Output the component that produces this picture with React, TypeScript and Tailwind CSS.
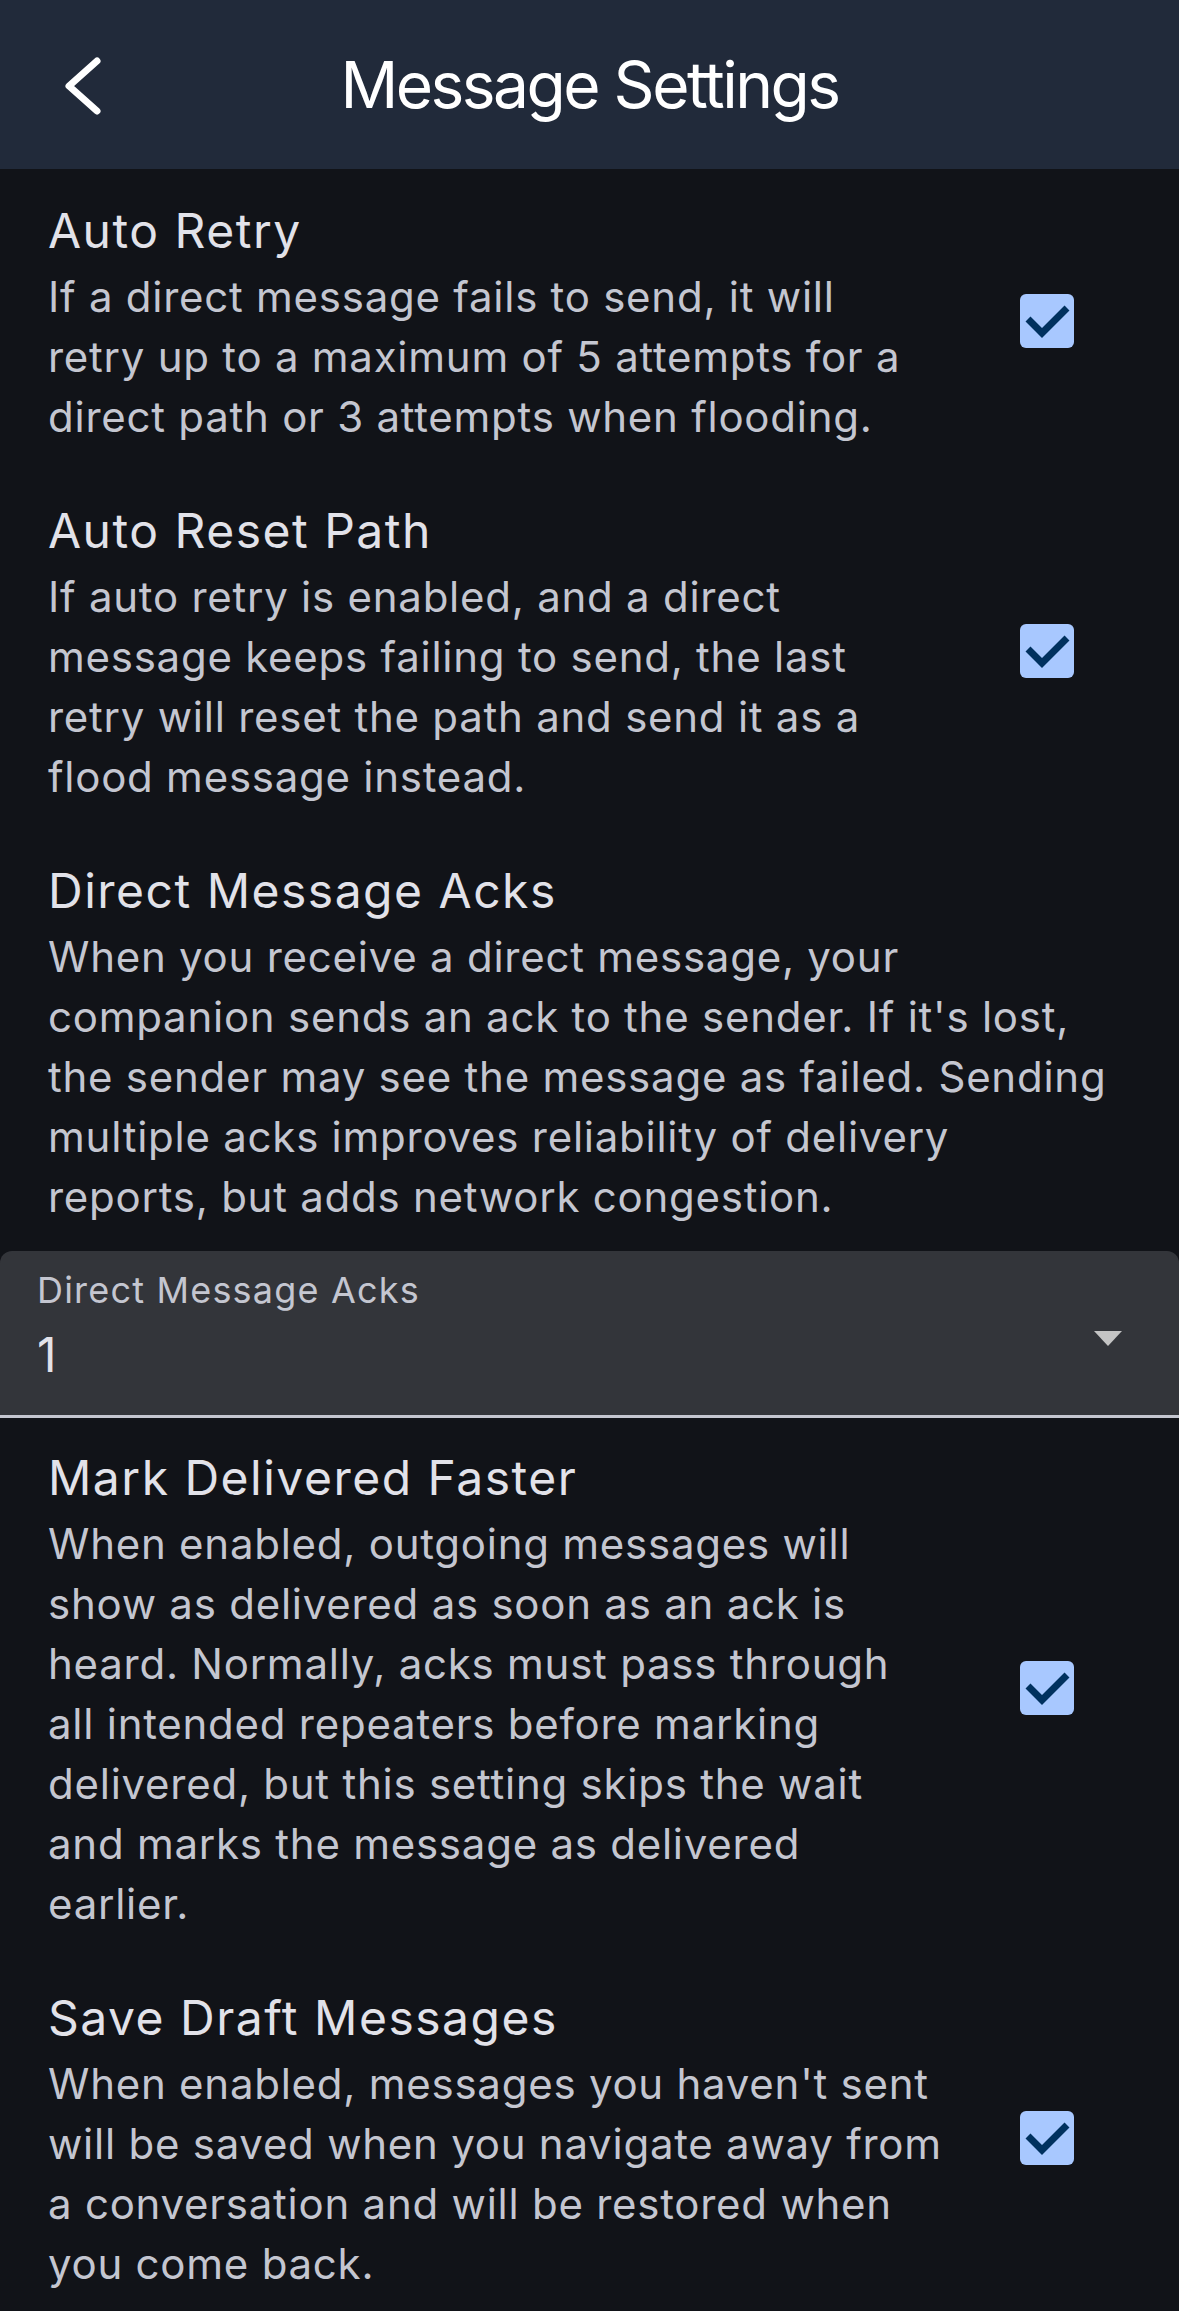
import React from "react";

type Setting = {
  title: string;
  lines: string[];
  checked?: boolean;
};

const top: Setting[] = [
  {
    title: "Auto Retry",
    lines: [
      "If a direct message fails to send, it will",
      "retry up to a maximum of 5 attempts for a",
      "direct path or 3 attempts when flooding.",
    ],
    checked: true,
  },
  {
    title: "Auto Reset Path",
    lines: [
      "If auto retry is enabled, and a direct",
      "message keeps failing to send, the last",
      "retry will reset the path and send it as a",
      "flood message instead.",
    ],
    checked: true,
  },
];

const acks: Setting = {
  title: "Direct Message Acks",
  lines: [
    "When you receive a direct message, your",
    "companion sends an ack to the sender. If it's lost,",
    "the sender may see the message as failed. Sending",
    "multiple acks improves reliability of delivery",
    "reports, but adds network congestion.",
  ],
};

const bottom: Setting[] = [
  {
    title: "Mark Delivered Faster",
    lines: [
      "When enabled, outgoing messages will",
      "show as delivered as soon as an ack is",
      "heard. Normally, acks must pass through",
      "all intended repeaters before marking",
      "delivered, but this setting skips the wait",
      "and marks the message as delivered",
      "earlier.",
    ],
    checked: true,
  },
  {
    title: "Save Draft Messages",
    lines: [
      "When enabled, messages you haven't sent",
      "will be saved when you navigate away from",
      "a conversation and will be restored when",
      "you come back.",
    ],
    checked: true,
  },
];

function Checkbox() {
  return (
    <div className="w-[54px] h-[54px] rounded-[6px] bg-[#a8c8ff]">
      <svg width="54" height="54" viewBox="0 0 54 54">
        <path d="M8 25 L22 39 L47 14" fill="none" stroke="#00315f" strokeWidth="7" />
      </svg>
    </div>
  );
}

function SettingTile({ s }: { s: Setting }) {
  return (
    <div className="flex items-center pl-[48px] py-[24px]">
      <div className="flex-1 min-w-0">
        <div className="text-[48px] leading-[72px] tracking-[1.5px] text-[#e2e2e9] whitespace-nowrap">{s.title}</div>
        {s.lines.map((line, i) => (
          <div key={i} className="text-[42px] leading-[60px] tracking-[0.75px] text-[#c4c6d0] whitespace-nowrap">
            {line}
          </div>
        ))}
      </div>
      {s.checked && (
        <div className="w-[144px] ml-[48px] mr-[60px] flex justify-center shrink-0">
          <Checkbox />
        </div>
      )}
    </div>
  );
}

export default function App() {
  return (
    <div className="h-[2311px] overflow-hidden bg-[#111318]" style={{ fontFamily: "Inter, 'Noto Sans', sans-serif" }}>
      {/* App bar */}
      <header className="h-[169px] bg-[#212a3a] flex items-center relative">
        <button className="absolute left-[52px] top-[46px] w-[60px] h-[80px] flex items-center justify-center">
          <svg width="60" height="80" viewBox="0 0 60 80">
            <path d="M45 15 L17 40 L45 65" fill="none" stroke="#ffffff" strokeWidth="7" strokeLinecap="round" strokeLinejoin="round" />
          </svg>
        </button>
        <h1 className="flex-1 text-center text-[64px] tracking-[-2.5px] text-white font-normal">Message Settings</h1>
      </header>

      <div className="pt-[2px]">
        {top.map((s) => (
          <SettingTile key={s.title} s={s} />
        ))}
        <SettingTile s={acks} />

        {/* Dropdown field */}
        <div className="bg-[#33353a] rounded-t-[12px] border-b-[3px] border-[#c4c6d0] h-[167px] pl-[37px] pr-[57px] flex items-center">
          <div className="flex-1 -mt-[4px]">
            <div className="text-[36px] leading-[48px] tracking-[1.2px] text-[#c4c6d0] -translate-y-[5px]">Direct Message Acks</div>
            <div className="text-[48px] leading-[72px] tracking-[1.5px] text-[#e2e2e9]">1</div>
          </div>
          <svg width="28" height="15" viewBox="0 0 28 15" className="mt-[10px]">
            <path d="M0 0 L28 0 L14 15 Z" fill="#c4c4c4" />
          </svg>
        </div>

        {bottom.map((s) => (
          <SettingTile key={s.title} s={s} />
        ))}
      </div>
    </div>
  );
}
